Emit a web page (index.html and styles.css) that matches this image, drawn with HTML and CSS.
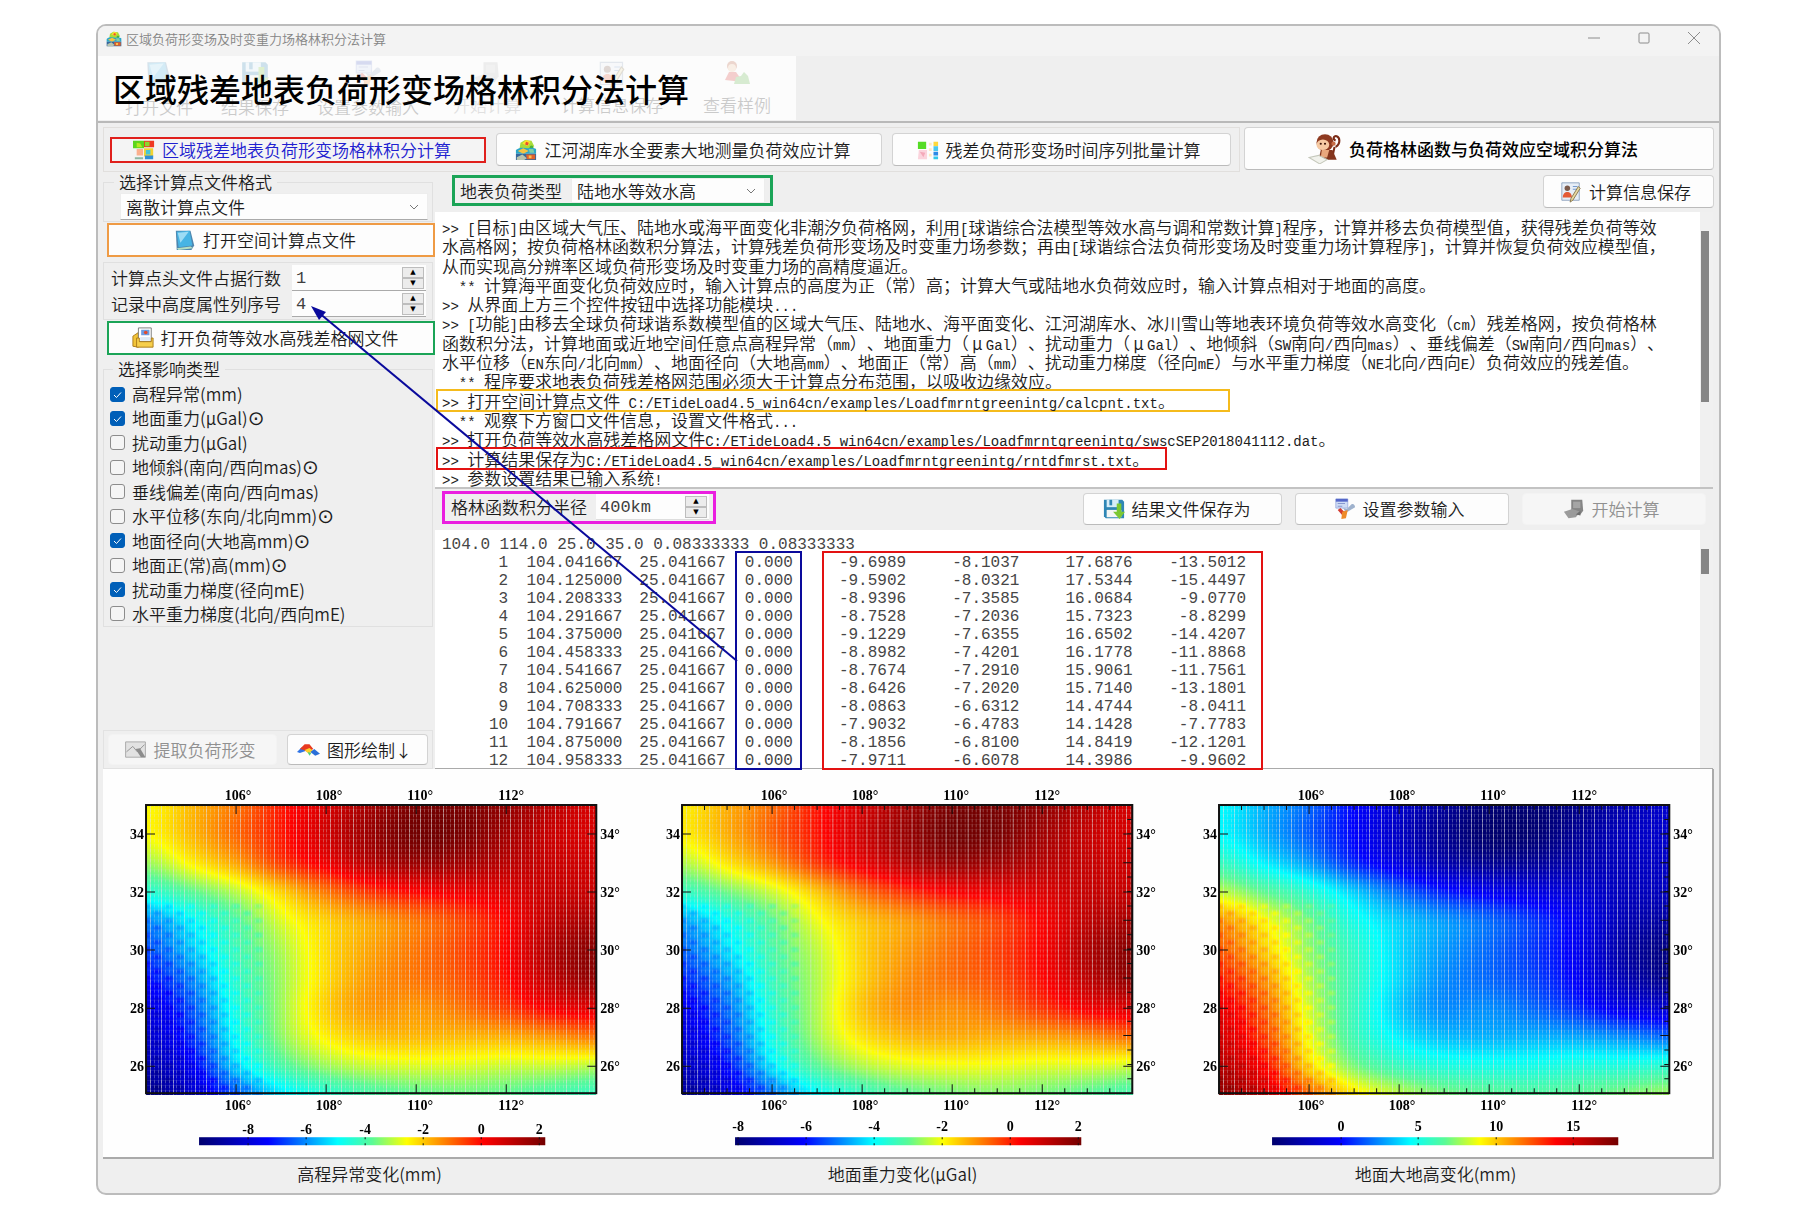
FILE: index.html
```html
<!DOCTYPE html>
<html lang="zh-CN">
<head>
<meta charset="utf-8">
<title>区域负荷形变场及时变重力场格林积分法计算</title>
<link rel="stylesheet" href="styles.css">
</head>
<body>
<svg class="defs" aria-hidden="true">
  <symbol id="i-app" viewBox="0 0 24 24">
    <path d="M5 10l1-6 5-3 7 1 3 6-6 4z" fill="#a8dc3a"/><path d="M8 5l4-4 5 2-3 5z" fill="#ffe02a"/><path d="M12 3l3 1-1 3-3-1z" fill="#e8502c"/><circle cx="18" cy="9" r="2" fill="#4db23a"/>
    <path d="M1 12c5-4 9-2 13-2s6-1 9 1v5H1z" fill="#2aa7c9"/><path d="M3 13l6-3 6 3-6 3z" fill="#f5c443"/><path d="M15 11l5 0 1 4h-5z" fill="#7fd0a8"/>
    <path d="M1 16h22v7H1z" fill="#35679c"/><path d="M2 20l6-3 5 4-3 2H2z" fill="#b9c4ae"/><path d="M12 17h10v5h-9z" fill="#e0622c"/><path d="M15 18h3v3h-3z" fill="#fbc04d"/>
  </symbol>
  <symbol id="i-grid" viewBox="0 0 24 24">
    <path d="M0 2h12v8H0z" fill="#5cd61c"/><path d="M4 4l4 1 2 4H4z" fill="#b8e820"/><path d="M12 2h11v7H12z" fill="#ef3a22"/><path d="M13 3h5v5h-5z" fill="#8ed62c"/>
    <path d="M12 10h10v9H12z" fill="#f3d431"/><path d="M14 12h5v5h-5z" fill="#46c5d8"/><path d="M4 11h7v7H4z" fill="#fbb08e"/><path d="M13 18h9v4h-9z" fill="#2f8fd8"/><path d="M2 20h9v2H2z" fill="#8db7a3"/>
  </symbol>
  <symbol id="i-series" viewBox="0 0 24 24">
    <path d="M1 3h9v8H1z" fill="#55dc25"/><path d="M2 12h9v10H1z" fill="#fbd3dc"/><path d="M3 14l6 1-2 5z" fill="#f4a9b9"/><path d="M13 4h3v3h-3zM13 10h3v3h-3zM13 16h3v3h-3z" fill="#ffe9c2"/>
    <path d="M18 3h5v5h-5z" fill="#ffd83d"/><path d="M18 8h5v5h-5z" fill="#4bc9ef"/><path d="M18 14h5v4h-5z" fill="#2d8ae6"/><path d="M18 19h5v3h-5z" fill="#31c8ea"/>
  </symbol>
  <symbol id="i-monkey" viewBox="0 0 32 28">
    <path d="M26 12c5-3 4-9 1-10s-4 3-1 4M25 12l-2 9" fill="none" stroke="#7b2c17" stroke-width="2"/>
    <circle cx="16" cy="8" r="8" fill="#8e3a20"/><circle cx="24" cy="9" r="2" fill="#c66b45"/><ellipse cx="14" cy="10" rx="6" ry="5" fill="#f6c9a2"/>
    <circle cx="12" cy="9" r="1" fill="#3a1408"/><circle cx="16" cy="9" r="1" fill="#3a1408"/><path d="M12 15h11l4 9H10z" fill="#84351d"/><path d="M13 15h7l-2 7h-6z" fill="#e9a77d"/>
    <path d="M1 22l9-2 8 4-7 4z" fill="#f1f2ec" stroke="#c5c8bb"/>
  </symbol>
  <symbol id="i-report" viewBox="0 0 24 24">
    <path d="M2 2h19v19H2z" fill="#e7eef7" stroke="#8da2bd"/><circle cx="8" cy="8" r="3" fill="#7b5a4b"/><path d="M3 18c0-8 10-8 10 0z" fill="#e45a35"/><path d="M14 6h5M14 9h5" stroke="#6b93c9"/>
    <path d="M22 8l-8 13-3 2 1-4L20 6z" fill="#e8d9a2" stroke="#85744a"/>
  </symbol>
  <symbol id="i-book" viewBox="0 0 24 24">
    <path d="M2 2h16l4 16-3 5H3z" fill="#4e86ae"/><path d="M3 3l14-1 3 16-15 2z" fill="#47b4e4"/><path d="M4 4l12-1-9 12z" fill="#9ddcf5"/><path d="M3 21l15-2 3 2-16 2z" fill="#b6dfc3"/>
  </symbol>
  <symbol id="i-folder" viewBox="0 0 24 24">
    <path d="M1 10l6-4v16l-6-1z" fill="#f2c438" stroke="#a87817"/><path d="M7 1h14v15H7z" fill="#fff" stroke="#777"/><path d="M10 3h9v6h-9z" fill="#6d9ce0"/><circle cx="15" cy="6" r="2" fill="#e24b2c"/>
    <path d="M5 12h3v4h13v-4h2v10H5z" fill="#f7cf4b" stroke="#a87817"/><path d="M9 11h11v4H9z" fill="#dce9f5"/>
  </symbol>
  <symbol id="i-save" viewBox="0 0 24 24">
    <path d="M1 2h20l2 2v18H3l-2-2z" fill="#2f86b5"/><path d="M4 2h13v8H4z" fill="#d6edf8"/><path d="M7 2h3v6H7z" fill="#2f86b5"/><path d="M4 13h16v8H4z" fill="#f4f6f4"/>
    <path d="M15 6h5v9h4l-6 8-7-8h4z" fill="#7cc832"/>
  </symbol>
  <symbol id="i-tools" viewBox="0 0 24 24">
    <path d="M2 1h13v10H2z" fill="#cfdcf5" stroke="#a0b0e0"/><path d="M2 1h13v3H2z" fill="#5567c9"/><path d="M4 6h8M4 9h5" stroke="#8193cb"/>
    <path d="M10 11l4 1 4-4c2-3 5-1 5 2l-5 3-5 3z" fill="#9fb2cd"/><path d="M4 13l3-2 6 6-3 3z" fill="#d43a31"/><path d="M9 15l6-2-2 9-5 1z" fill="#ee8a28"/>
  </symbol>
  <symbol id="i-run" viewBox="0 0 24 24">
    <path d="M9 2h12l1 12-3 4H9z" fill="#858585"/><path d="M11 4h8v7h-8z" fill="#a5a5a5"/><path d="M1 15l9-3 9 3-5 6-8 1z" fill="#9b9b9b"/><path d="M14 18l5-4v5z" fill="#6e6e6e"/>
  </symbol>
  <symbol id="i-extract" viewBox="0 0 24 20">
    <path d="M1 1h22v17H1z" fill="#e2e2e2" stroke="#a5a5a5"/><path d="M2 12l7-6 5 6 8-8" fill="none" stroke="#909090"/><path d="M12 9l5-1 6 10h-5z" fill="#8c8c8c"/>
  </symbol>
  <symbol id="i-surface" viewBox="0 0 24 14">
    <path d="M0 9l5-5 4 4-6 2z" fill="#2f74e6"/><path d="M3 6l5-5 5 0 4 5-6 3-4-2z" fill="#e8391f"/><path d="M8 7l5-2 4 3-5 3z" fill="#ffd029"/><path d="M14 9l4-3 6 5-5 2z" fill="#2a6fd8"/><path d="M11 9l4 1-2 3z" fill="#4bd184"/>
  </symbol>
  <symbol id="i-guide" viewBox="0 0 32 28">
    <circle cx="11" cy="6" r="5" fill="#b5522e"/><ellipse cx="11" cy="8" rx="4" ry="4" fill="#f2c29c"/><path d="M4 20l4-8h7l7 10z" fill="#d9302a"/><path d="M13 24l2-7 5-1 3-4 4 4 2 8z" fill="#57b13d"/>
  </symbol>
</svg>

<main class="window">
  <header class="titlebar">
    <svg class="icon-16"><use href="#i-app"/></svg>
    <span class="titlebar-text">区域负荷形变场及时变重力场格林积分法计算</span>
    <button class="win-btn" aria-label="最小化"><svg viewBox="0 0 12 12"><path d="M0 6h12"/></svg></button>
    <button class="win-btn" aria-label="最大化"><svg viewBox="0 0 12 12"><rect x="1" y="1" width="10" height="10" rx="1"/></svg></button>
    <button class="win-btn" aria-label="关闭"><svg viewBox="0 0 12 12"><path d="M0 0l12 12M12 0L0 12"/></svg></button>
  </header>

  <section class="toolbar">
    <nav class="tools">
      <button><svg><use href="#i-book"/></svg>打开文件</button>
      <button><svg><use href="#i-save"/></svg>结果保存</button>
      <button><svg><use href="#i-tools"/></svg>设置参数输入</button>
      <button class="dim"><svg><use href="#i-run"/></svg>开始计算</button>
      <button><svg><use href="#i-report"/></svg>计算信息保存</button>
      <button><svg><use href="#i-guide"/></svg>查看样例</button>
    </nav>
    <h1>区域残差地表负荷形变场格林积分法计算</h1>
  </section>

  <div class="body">
    <div class="modes">
      <div class="mode-group">
        <button class="btn mode-1"><svg><use href="#i-grid"/></svg>区域残差地表负荷形变场格林积分计算</button>
        <button class="btn mode-2"><svg><use href="#i-app"/></svg>江河湖库水全要素大地测量负荷效应计算</button>
        <button class="btn mode-3"><svg><use href="#i-series"/></svg>残差负荷形变场时间序列批量计算</button>
      </div>
      <button class="btn mode-4"><svg class="icon-wide"><use href="#i-monkey"/></svg>负荷格林函数与负荷效应空域积分算法</button>
    </div>

    <div class="work">
      <aside class="side">
        <fieldset class="format">
          <legend><label for="format">选择计算点文件格式</label></legend>
          <select id="format"><option>离散计算点文件</option></select>
        </fieldset>
        <button class="btn open-points"><svg><use href="#i-book"/></svg>打开空间计算点文件</button>
        <div class="spins">
          <label for="head">计算点头文件占据行数</label>
          <span class="spin"><input id="head" value="1"><span class="arrows"><button aria-label="增加">▲</button><button aria-label="减少">▼</button></span></span>
          <label for="col">记录中高度属性列序号</label>
          <span class="spin"><input id="col" value="4"><span class="arrows"><button aria-label="增加">▲</button><button aria-label="减少">▼</button></span></span>
        </div>
        <button class="btn open-grid"><svg><use href="#i-folder"/></svg>打开负荷等效水高残差格网文件</button>
        <fieldset class="effects">
          <legend>选择影响类型</legend>
          <div class="checks">
            <label><input type="checkbox" checked>高程异常(mm)</label>
            <label><input type="checkbox" checked>地面重力(μGal)<i>⊙</i></label>
            <label><input type="checkbox">扰动重力(μGal)</label>
            <label><input type="checkbox">地倾斜(南向/西向mas)<i>⊙</i></label>
            <label><input type="checkbox">垂线偏差(南向/西向mas)</label>
            <label><input type="checkbox">水平位移(东向/北向mm)<i>⊙</i></label>
            <label><input type="checkbox" checked>地面径向(大地高mm)<i>⊙</i></label>
            <label><input type="checkbox">地面正(常)高(mm)<i>⊙</i></label>
            <label><input type="checkbox" checked>扰动重力梯度(径向mE)</label>
            <label><input type="checkbox">水平重力梯度(北向/西向mE)</label>
          </div>
        </fieldset>
        <div class="side-actions">
          <button class="btn extract" disabled><svg><use href="#i-extract"/></svg>提取负荷形变</button>
          <button class="btn draw"><svg><use href="#i-surface"/></svg>图形绘制↓</button>
        </div>
      </aside>

      <section class="content">
        <div class="load-row">
          <div class="load-type">
            <label for="load">地表负荷类型</label>
            <select id="load"><option>陆地水等效水高</option></select>
          </div>
          <button class="btn save-info"><svg><use href="#i-report"/></svg>计算信息保存</button>
        </div>

        <div class="log">
          <div class="log-lines">
            <p><code>&gt;&gt; [</code>目标<code>]</code>由区域大气压、陆地水或海平面变化非潮汐负荷格网，利用<code>[</code>球谐综合法模型等效水高与调和常数计算<code>]</code>程序，计算并移去负荷模型值，获得残差负荷等效</p>
            <p>水高格网；按负荷格林函数积分算法，计算残差负荷形变场及时变重力场参数；再由<code>[</code>球谐综合法负荷形变场及时变重力场计算程序<code>]</code>，计算并恢复负荷效应模型值，</p>
            <p>从而实现高分辨率区域负荷形变场及时变重力场的高精度逼近。</p>
            <p><code>  ** </code>计算海平面变化负荷效应时，输入计算点的高度为正（常）高；计算大气或陆地水负荷效应时，输入计算点相对于地面的高度。</p>
            <p><code>&gt;&gt; </code>从界面上方三个控件按钮中选择功能模块<code>...</code></p>
            <p><code>&gt;&gt; [</code>功能<code>]</code>由移去全球负荷球谐系数模型值的区域大气压、陆地水、海平面变化、江河湖库水、冰川雪山等地表环境负荷等效水高变化（<code>cm</code>）残差格网，按负荷格林</p>
            <p>函数积分法，计算地面或近地空间任意点高程异常（<code>mm</code>）、地面重力（<span class="wide">μ</span><code>Gal</code>）、扰动重力（<span class="wide">μ</span><code>Gal</code>）、地倾斜（<code>SW</code>南向<code>/</code>西向<code>mas</code>）、垂线偏差（<code>SW</code>南向<code>/</code>西向<code>mas</code>）、</p>
            <p>水平位移（<code>EN</code>东向<code>/</code>北向<code>mm</code>）、地面径向（大地高<code>mm</code>）、地面正（常）高（<code>mm</code>）、扰动重力梯度（径向<code>mE</code>）与水平重力梯度（<code>NE</code>北向<code>/</code>西向<code>E</code>）负荷效应的残差值。</p>
            <p><code>  ** </code>程序要求地表负荷残差格网范围必须大于计算点分布范围，以吸收边缘效应。</p>
            <p class="mark mark-points"><code>&gt;&gt; </code>打开空间计算点文件<code> C:/ETideLoad4.5_win64cn/examples/Loadfmrntgreenintg/calcpnt.txt</code>。</p>
            <p><code>  ** </code>观察下方窗口文件信息，设置文件格式<code>...</code></p>
            <p><code>&gt;&gt; </code>打开负荷等效水高残差格网文件<code>C:/ETideLoad4.5_win64cn/examples/Loadfmrntgreenintg/swscSEP2018041112.dat</code>。</p>
            <p class="mark mark-result"><code>&gt;&gt; </code>计算结果保存为<code>C:/ETideLoad4.5_win64cn/examples/Loadfmrntgreenintg/rntdfmrst.txt</code>。</p>
            <p><code>&gt;&gt; </code>参数设置结果已输入系统<code>!</code></p>
          </div>
          <div class="scroll"><div class="thumb thumb-log"></div></div>
        </div>

        <div class="run-row">
          <div class="radius">
            <label for="radius">格林函数积分半径</label>
            <span class="spin"><input id="radius" value="400km"><span class="arrows"><button aria-label="增加">▲</button><button aria-label="减少">▼</button></span></span>
          </div>
          <button class="btn save-result"><svg><use href="#i-save"/></svg>结果文件保存为</button>
          <button class="btn set-params"><svg><use href="#i-tools"/></svg>设置参数输入</button>
          <button class="btn start" disabled><svg><use href="#i-run"/></svg>开始计算</button>
        </div>

        <div class="data">
          <div class="data-main">
            <p>104.0 114.0 25.0 35.0 0.08333333 0.08333333</p>
            <table>
              <colgroup><col class="c-no"><col class="c-lon"><col class="c-lat"><col class="c-h"><col class="c-v"><col class="c-v"><col class="c-v"><col class="c-v"></colgroup>
              <tbody>
              <tr><td>1</td><td>104.041667</td><td>25.041667</td><td>0.000</td><td>-9.6989</td><td>-8.1037</td><td>17.6876</td><td>-13.5012</td></tr>
              <tr><td>2</td><td>104.125000</td><td>25.041667</td><td>0.000</td><td>-9.5902</td><td>-8.0321</td><td>17.5344</td><td>-15.4497</td></tr>
              <tr><td>3</td><td>104.208333</td><td>25.041667</td><td>0.000</td><td>-8.9396</td><td>-7.3585</td><td>16.0684</td><td>-9.0770</td></tr>
              <tr><td>4</td><td>104.291667</td><td>25.041667</td><td>0.000</td><td>-8.7528</td><td>-7.2036</td><td>15.7323</td><td>-8.8299</td></tr>
              <tr><td>5</td><td>104.375000</td><td>25.041667</td><td>0.000</td><td>-9.1229</td><td>-7.6355</td><td>16.6502</td><td>-14.4207</td></tr>
              <tr><td>6</td><td>104.458333</td><td>25.041667</td><td>0.000</td><td>-8.8982</td><td>-7.4201</td><td>16.1778</td><td>-11.8868</td></tr>
              <tr><td>7</td><td>104.541667</td><td>25.041667</td><td>0.000</td><td>-8.7674</td><td>-7.2910</td><td>15.9061</td><td>-11.7561</td></tr>
              <tr><td>8</td><td>104.625000</td><td>25.041667</td><td>0.000</td><td>-8.6426</td><td>-7.2020</td><td>15.7140</td><td>-13.1801</td></tr>
              <tr><td>9</td><td>104.708333</td><td>25.041667</td><td>0.000</td><td>-8.0863</td><td>-6.6312</td><td>14.4744</td><td>-8.0411</td></tr>
              <tr><td>10</td><td>104.791667</td><td>25.041667</td><td>0.000</td><td>-7.9032</td><td>-6.4783</td><td>14.1428</td><td>-7.7783</td></tr>
              <tr><td>11</td><td>104.875000</td><td>25.041667</td><td>0.000</td><td>-8.1856</td><td>-6.8100</td><td>14.8419</td><td>-12.1201</td></tr>
              <tr><td>12</td><td>104.958333</td><td>25.041667</td><td>0.000</td><td>-7.9711</td><td>-6.6078</td><td>14.3986</td><td>-9.9602</td></tr>
              </tbody>
            </table>
          </div>
          <div class="scroll"><div class="thumb thumb-data"></div></div>
          <div class="box box-height"></div>
          <div class="box box-values"></div>
        </div>
      </section>
      <svg class="pointer" viewBox="0 0 434 362" aria-hidden="true"><path d="M429 358L10 9" stroke="#0a0a9c" stroke-width="2"/><path d="M3 3l15 6-7 8z" fill="#0a0a9c"/></svg>
    </div>

    <div class="plots">
      <div class="plot" data-plot="0"></div>
      <div class="plot" data-plot="1"></div>
      <div class="plot" data-plot="2"></div>
    </div>
    <footer class="captions"><span>高程异常变化(mm)</span><span>地面重力变化(μGal)</span><span>地面大地高变化(mm)</span></footer>
  </div>
</main>
<script src="plots.js"></script>
</body>
</html>
```
FILE: styles.css
```css
* { box-sizing: border-box; }
body {
  margin: 0;
  padding: 24px 93px 14px 96px;
  background: #fff;
  color: #1c1c1c;
  font: 17px/20px "Noto Sans CJK SC", sans-serif;
  font-weight: 350;
  text-spacing-trim: space-all;
}
button, input, select { font: inherit; color: inherit; }
p, h1, fieldset { margin: 0; }
.defs { position: absolute; width: 0; height: 0; }

.window {
  background: #efefef;
  border: 2px solid #bcbcbc;
  border-radius: 10px;
  overflow: hidden;
}
.titlebar {
  display: flex;
  align-items: center;
  height: 30px;
  padding: 0 0 5px 8px;
  background: #f3f3f3;
  color: #858585;
  font-size: 13px;
}
.icon-16 { width: 16px; height: 16px; margin-right: 4px; }
.titlebar-text { flex: 1; }
.win-btn {
  width: 50px;
  height: 24px;
  padding: 0;
  border: 0;
  background: none;
}
.win-btn svg { width: 12px; height: 12px; fill: none; stroke: #8c8c8c; }

.toolbar {
  position: relative;
  height: 67px;
  border-bottom: 2px solid #b9b9b9;
}
.tools {
  display: flex;
  width: 698px;
  height: 64px;
  padding-left: 13px;
  background: #fcfcfc;
}
.tools button {
  display: flex;
  flex-direction: column;
  align-items: center;
  justify-content: space-between;
  padding: 4px 14px 3px;
  border: 0;
  background: none;
  white-space: nowrap;
  opacity: 0.22;
}
.tools button.dim { opacity: 0.12; }
.tools button:nth-child(n+4) { padding: 4px 20px 5px; }
.tools svg { width: 32px; height: 28px; }
.toolbar h1 {
  position: absolute;
  left: 15px;
  top: 12px;
  font-size: 32px;
  line-height: 40px;
  font-weight: 500;
  color: #000;
  white-space: nowrap;
}

.body { padding: 4px 5px 0 5px; }
.btn {
  display: flex;
  align-items: center;
  justify-content: center;
  gap: 7px;
  padding: 0 6px 0 0;
  background: #fdfdfd;
  border: 1px solid #d3d3d3;
  border-bottom-color: #bbb;
  border-radius: 4px;
  white-space: nowrap;
}
.mode-1, .mode-2, .mode-4, .open-points, .open-grid, .save-result { padding-right: 12px; }
.btn svg { width: 22px; height: 22px; }
.btn svg.icon-wide { width: 34px; height: 30px; }
.btn:disabled { background: #f6f6f6; border-color: #f3f3f3; color: #909090; }

.modes { display: flex; gap: 4px; height: 45px; }
.mode-group {
  flex: 1;
  display: flex;
  align-items: center;
  gap: 10px;
  padding: 0 8px 0 6px;
  border: 1px solid #e1dfdd;
}
.mode-1 { flex: 373; height: 26px; border: 2px solid #e0201c; border-radius: 0; background: #f4f4f4; color: #2020d0; }
.mode-2 { flex: 386; height: 33px; }
.mode-3 { flex: 343; height: 33px; }
.mode-4 { width: 470px; height: 43px; color: #000; font-weight: 500; }

.work {
  position: relative;
  display: grid;
  grid-template-columns: 330px minmax(0, 1fr);
  gap: 2px;
}
.side { display: flex; flex-direction: column; }
fieldset { padding: 0; border: 1px solid #e0e0e0; min-width: 0; }
legend { margin-left: 10px; padding: 0 5px; }
select {
  appearance: none;
  padding: 0 24px 0 5px;
  background-color: #fdfdfd;
  border: 1px solid #ededed;
  background-image: url("data:image/svg+xml,%3Csvg xmlns='http://www.w3.org/2000/svg' width='10' height='6'%3E%3Cpath d='M1 1l4 4 4-4' fill='none' stroke='%23777'/%3E%3C/svg%3E");
  background-repeat: no-repeat;
  background-position: right 8px center;
}
.format { height: 50px; }
.format select {
  display: block;
  width: 308px;
  height: 27px;
  margin: 1px 0 0 16px;
  border-bottom-color: #aaa;
}
.open-points, .open-grid { margin: 1px 0 0 4px; border-radius: 0; width: 328px; gap: 7px; height: 34px; }
.open-points { border: 2px solid #ef9b45; }
.open-grid { border: 2px solid #1ba457; }
.spins {
  display: grid;
  grid-template-columns: 181px 134px;
  align-content: center;
  margin-top: 5px;
  padding-left: 7px;
  height: 58px;
  border: 1px solid #e0e0e0;
}
.spins label { align-self: center; }
.spin {
  display: flex;
  align-items: center;
  height: 26px;
  padding-right: 2px;
  background: #fdfdfd;
  border-bottom: 1px solid #aaa;
}
.spin input {
  flex: 1;
  min-width: 0;
  padding: 3px 4px 0;
  border: 0;
  background: none;
  outline: 0;
  color: #404040;
  font-family: "Liberation Mono", monospace;
}
.arrows { display: flex; flex-direction: column; width: 22px; }
.arrows button {
  height: 11px;
  padding: 0;
  border: 1px solid #bdbdbd;
  background: #ececec;
  color: #000;
  font: 7px/8px "DejaVu Sans", sans-serif;
}
.effects { height: 268px; margin-top: 4px; }
.effects legend { margin-left: 9px; }
.checks {
  display: flex;
  flex-direction: column;
  justify-content: space-between;
  height: 245px;
  padding-top: 5px;
}
.checks label { display: flex; align-items: center; padding-left: 6px; height: 20px; }
.checks i { font: 20px/20px "DejaVu Sans", sans-serif; }
.checks input {
  appearance: none;
  width: 15px;
  height: 15px;
  margin: 0 7px 0 0;
  border: 1px solid #8c8c8c;
  border-radius: 3px;
  background: #f5f5f5;
}
.checks input:checked {
  border-color: #005fb8;
  background: #005fb8 url("data:image/svg+xml,%3Csvg xmlns='http://www.w3.org/2000/svg' width='13' height='13'%3E%3Cpath d='M3 7l2.5 2.5L10 4.5' fill='none' stroke='white'/%3E%3C/svg%3E") center no-repeat;
}
.side-actions {
  display: flex;
  gap: 10px;
  margin-top: auto;
  padding: 3px 4px;
  border: 1px solid #e2e2e2;
}
.extract { flex: 17; height: 31px; }
.draw { flex: 14; height: 31px; }
.draw svg, .extract svg { width: 23px; height: 18px; }

.content { display: flex; flex-direction: column; min-width: 0; }
.load-row { display: flex; justify-content: space-between; padding: 3px 0 5px 17px; height: 40px; }
.load-type {
  display: flex;
  align-items: center;
  gap: 9px;
  padding-left: 5px;
  width: 321px;
  height: 31px;
  border: 3px solid #1ba457;
}
.load-type select { width: 194px; height: 25px; }
.save-info { width: 171px; height: 33px; }

.log, .data { position: relative; display: flex; background: #fff; margin-right: 1px; }
.log { height: 277px; border-bottom: 2px solid #c3c3c3; }
.log-lines {
  flex: 1;
  min-width: 0;
  display: flex;
  flex-direction: column;
  justify-content: space-between;
  padding: 5px 0 0 7px;
  white-space: pre;
}
.log-lines p { height: 19px; line-height: 19px; flex: none; }
code { font-size: 14px; font-family: "Liberation Mono", monospace; line-height: 1; }
.wide { display: inline-block; width: 17px; text-align: center; line-height: 1; }
.log-lines .mark {
  height: 23px;
  margin: -2px 0 -2px -6px;
  padding-left: 4px;
  border: 2px solid #f5bb1c;
}
.mark-points { width: 794px; }
.log-lines .mark-result { width: 731px; border-color: #e31212; }
.scroll { width: 13px; background: #f0f0f0; padding-left: 1px; }
.thumb { width: 8px; background: #858585; }
.thumb-log { height: 171px; margin-top: 19px; }
.thumb-data { height: 25px; margin-top: 19px; }

.run-row { display: flex; align-items: center; gap: 13px; height: 41px; padding-right: 8px; }
.radius {
  display: flex;
  align-items: center;
  gap: 9px;
  width: 274px;
  height: 33px;
  margin: 0 auto 5px 7px;
  padding-left: 6px;
  border: 3px solid #ea1fe0;
}
.radius .spin { width: 113px; border-bottom-color: #ddd; }
.run-row .btn { height: 32px; margin-bottom: 2px; }
.save-result { width: 199px; }
.set-params { width: 214px; }
.start { width: 184px; }

.data {
  height: 239px;
  border-bottom: 1px solid #aaa;
  color: #464646;
  font: 16px/18px "Liberation Mono", monospace;
}
.data-main { flex: 1; min-width: 0; padding-top: 6px; }
.data p { padding-left: 7px; white-space: pre; }
table { table-layout: fixed; width: 811px; border-collapse: collapse; }
td { height: 18px; padding: 0; text-align: right; white-space: nowrap; }
.c-no { width: 73px; }
.c-lon { width: 114px; }
.c-lat { width: 103px; }
.c-h { width: 67px; }
.c-v { width: 113px; }
.box { position: absolute; top: 21px; height: 219px; border: 2px solid; }
.box-height { left: 300px; width: 67px; border-color: #0a0a9c; }
.box-values { left: 387px; width: 441px; border-color: #e31212; }
.pointer { position: absolute; left: 205px; top: 131px; width: 434px; height: 362px; pointer-events: none; fill: none; }

.plots {
  display: grid;
  grid-template-columns: repeat(3, minmax(0, 1fr));
  background: #fefefe;
  border: 1px solid #aaa;
  border-width: 0 2px 2px 0;
}
.plot { position: relative; }
.plot svg { display: block; position: relative; width: 100%; font: bold 14px "Liberation Serif", serif; }
.plot canvas { position: absolute; left: 8%; top: 9%; width: 84%; height: 75%; }
.captions {
  display: grid;
  grid-template-columns: repeat(3, 1fr);
  padding: 5px 12px 9px 0;
  text-align: center;
}
```
FILE: plots.js
```js
// Normalised field on a 1-degree mesh: rows 35°..25° N, columns 104°..114° E.
const field = [
  [.60,.66,.72,.80,.87,.94,.99,.99,.96,.91,.87],
  [.60,.66,.73,.80,.88,.95,1.0,.99,.94,.89,.87],
  [.54,.61,.68,.77,.84,.91,.95,.94,.91,.89,.88],
  [.44,.50,.56,.64,.72,.78,.82,.84,.86,.89,.89],
  [.31,.40,.49,.58,.64,.68,.72,.76,.82,.90,.93],
  [.26,.36,.47,.55,.63,.68,.72,.76,.82,.92,.97],
  [.21,.31,.45,.54,.63,.69,.72,.75,.81,.90,.96],
  [.16,.27,.43,.54,.64,.69,.69,.72,.77,.83,.86],
  [.13,.24,.41,.53,.61,.65,.66,.66,.67,.69,.72],
  [.09,.19,.37,.48,.54,.57,.58,.58,.57,.57,.56],
  [.04,.13,.27,.38,.44,.48,.50,.51,.50,.48,.46]
];
const stops = [[0,0,0,110],[.2,0,0,255],[.4,0,255,255],[.5,90,250,150],[.6,255,255,0],[.82,255,0,0],[1,115,0,0]];
const plots = [
  { map: t => t, base: 365, ticks: [['-8',145],['-6',203],['-4',262],['-2',320],['0',378],['2',436]] },
  { map: t => t + .03 * (1 - t), base: 362, ticks: [['-8',99],['-6',167],['-4',235],['-2',303],['0',371],['2',439]] },
  { map: t => 1 - t, base: 362, ticks: [['0',165],['5',242],['10',320],['15',397]] }
];

function color(t) {
  t = Math.max(0, Math.min(1, t));
  let i = 1;
  while (i < stops.length - 1 && t > stops[i][0]) i++;
  const a = stops[i - 1], b = stops[i], k = (t - a[0]) / (b[0] - a[0]);
  return [1, 2, 3].map(c => a[c] + (b[c] - a[c]) * k);
}
function cubic(p, k) {
  return p[1] + .5 * k * (p[2] - p[0] + k * (2*p[0] - 5*p[1] + 4*p[2] - p[3] + k * (3*(p[1] - p[2]) + p[3] - p[0])));
}
const clamp = i => Math.max(0, Math.min(10, i));
function sample(x, y) {
  const i = Math.min(9, Math.floor(x)), j = Math.min(9, Math.floor(y));
  const rows = [-1, 0, 1, 2].map(dj => cubic([-1, 0, 1, 2].map(di => field[clamp(j + dj)][clamp(i + di)]), x - i));
  return cubic(rows, y - j);
}
function paint(canvas, map) {
  const w = canvas.width = 450, h = canvas.height = 290;
  const g = canvas.getContext('2d'), img = g.createImageData(w, h);
  for (let y = 0; y < h; y++) for (let x = 0; x < w; x++) {
    const lon = x / (w - 1) * 10, lat = y / (h - 1) * 10;
    let t = sample(lon, lat);
    // station ripple in the south-west
    if (lon < 2.6 && lat > 3.4) t -= .03 * Math.max(0, Math.cos(lon * 4 * Math.PI) * Math.cos(lat * 4 * Math.PI));
    const c = color(map(t)), n = (y * w + x) * 4;
    const col = Math.floor(x / 3.75), edge = x - col * 3.75 < 1, row = y % 5 < 3;
    const a = edge ? (col % 3 === 1 ? (row ? .65 : .45) : (row ? .32 : .1)) : (y % 5 === 0 ? .1 : 0);
    for (let k = 0; k < 3; k++) img.data[n + k] = c[k] + (225 - c[k]) * a;
    img.data[n + 3] = 255;
  }
  g.putImageData(img, 0, 0);
}
document.querySelectorAll('.plot').forEach(el => {
  const id = +el.dataset.plot, p = plots[id];
  let marks = '', text = '';
  for (let d = .5; d < 10; d += .5) {
    const x = 43 + d * 45, y = 36 + d * 28.8, major = d % 2 === 0;
    const len = major ? 9 : 5;
    if (major || id) marks += `M${x} 36v${len}M${x} 324v-${len}`;
    if (id) marks += `M493 ${y}h-${len}`;
  }
  [34, 32, 30, 28, 26].forEach((v, i) => {
    const y = 65 + i * 58;
    marks += `M43 ${y}h9M493 ${y}h-9`;
    text += `<text x="41" y="${y + 5}" text-anchor="end">${v}</text><text x="497" y="${y + 5}">${v}°</text>`;
  });
  [106, 108, 110, 112].forEach((v, i) => {
    const x = 135 + i * 91;
    text += `<text x="${x}" y="31" text-anchor="middle">${v}°</text><text x="${x}" y="341" text-anchor="middle">${v}°</text>`;
  });
  const bar = stops.map(s => `<stop offset="${s[0]}" stop-color="rgb(${s.slice(1)})"/>`).join('');
  p.ticks.forEach(([v, x]) => {
    marks += `M${x} 368v2M${x} 374v2`;
    text += `<text x="${x}" y="${p.base}" text-anchor="middle">${v}</text>`;
  });
  el.innerHTML = `<canvas></canvas><svg viewBox="0 0 536 388"><defs><linearGradient id="bar${id}">${bar}</linearGradient></defs>
    <rect x="96" y="368" width="346" height="8" fill="url(#bar${id})"/>
    <rect x="43" y="36" width="450" height="288" fill="none" stroke="#111" stroke-width="2"/>
    <path d="${marks}" stroke="#111" fill="none"/>${text}</svg>`;
  paint(el.querySelector('canvas'), p.map);
});
```
